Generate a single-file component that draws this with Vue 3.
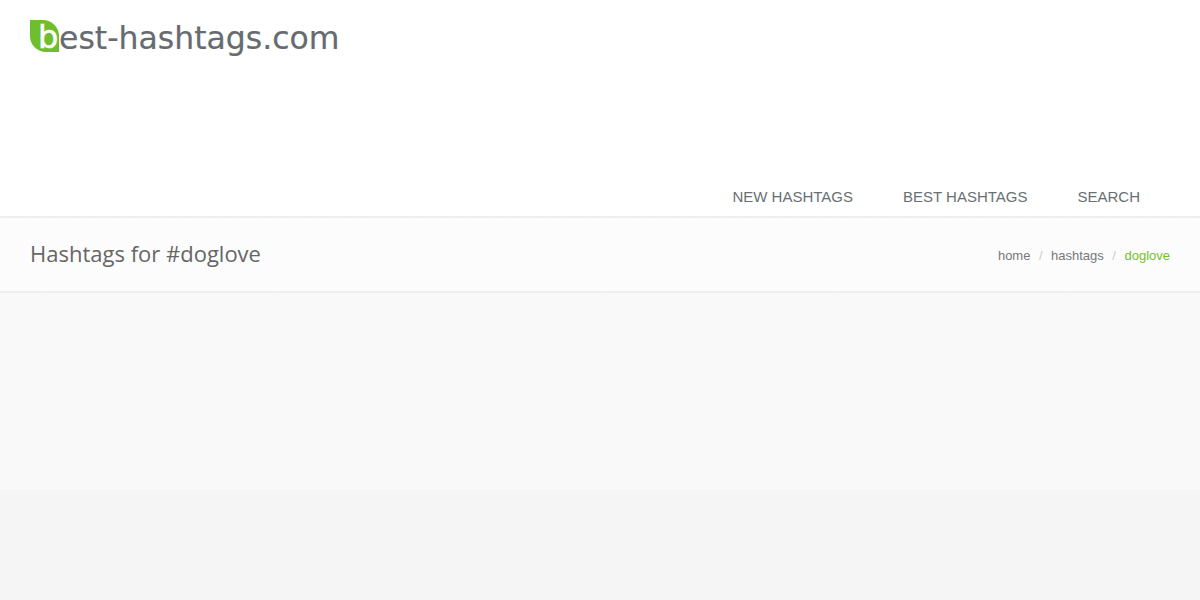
<template>
  <div class="page">
    <header class="header">
      <a class="logo">
        <span class="logo-mark">b</span><span class="logo-text">est-hashtags.com</span>
      </a>
      <nav class="nav">
        <a v-for="item in navItems" :key="item" class="nav-link">{{ item }}</a>
      </nav>
    </header>
    <section class="titlebar">
      <h1 class="title">Hashtags for #doglove</h1>
      <ul class="crumbs">
        <li v-for="(c, i) in crumbs" :key="c" class="crumb">
          <span v-if="i > 0" class="sep">/</span>
          <a :class="{ active: i === crumbs.length - 1 }">{{ c }}</a>
        </li>
      </ul>
    </section>
    <main class="content"></main>
    <footer class="footer"></footer>
  </div>
</template>

<script setup>
const navItems = ['NEW HASHTAGS', 'BEST HASHTAGS', 'SEARCH']
const crumbs = ['home', 'hashtags', 'doglove']
</script>

<style>
html, body { margin: 0; padding: 0; background: #f5f5f5; }
</style>

<style scoped>
.page {
  display: flex;
  flex-direction: column;
  height: 600px;
  overflow: hidden;
  font-family: "Liberation Sans", Arial, sans-serif;
}
.header {
  display: flex;
  flex-direction: column;
  justify-content: space-between;
  height: 216px;
  box-sizing: border-box;
  padding: 20px 30px 0;
  background: #fff;
}
.logo {
  display: flex;
  align-items: flex-start;
  height: 32px;
}
.logo-mark {
  width: 29px;
  height: 32px;
  box-sizing: border-box;
  padding-left: 8px;
  background: #6fbe2e;
  border-radius: 0 16px 0 16px;
  color: #fff;
  font-family: "DejaVu Sans", Verdana, sans-serif;
  font-size: 32px;
  line-height: 35px;
  -webkit-text-stroke: 0.5px #fff;
}
.logo-text {
  color: #666b70;
  font-family: "DejaVu Sans", Verdana, sans-serif;
  font-size: 31.5px;
  line-height: 37px;
  white-space: nowrap;
  -webkit-text-stroke: 0.2px #666b70;
}
.nav {
  display: flex;
  justify-content: flex-end;
  gap: 50px;
  padding-right: 30px;
  padding-bottom: 9px;
}
.nav-link {
  color: #687074;
  font-size: 15px;
  line-height: 20px;
}
.titlebar {
  display: flex;
  align-items: center;
  justify-content: space-between;
  height: 77px;
  box-sizing: border-box;
  padding: 0 30px;
  background: repeating-linear-gradient(135deg, #fdfdfd 0 2px, #fcfcfc 2px 4px);
  border-top: 2px solid #eeeeee;
  border-bottom: 2px solid #eeeeee;
}
.title {
  margin: -4px 0 0;
  color: #666;
  font-family: "Open Sans", sans-serif;
  font-size: 22px;
  font-weight: 400;
  line-height: 30px;
}
.crumbs {
  display: flex;
  margin: 1px 0 0;
  padding: 0;
  list-style: none;
  color: #777;
  font-size: 13px;
}
.sep {
  padding: 0 8.5px;
  color: #ccc;
}
.active {
  color: #72c02c;
}
.content {
  height: 197px;
  background: #f9f9f9;
}
.footer {
  flex: 1;
  background: #f5f5f5;
}
</style>
